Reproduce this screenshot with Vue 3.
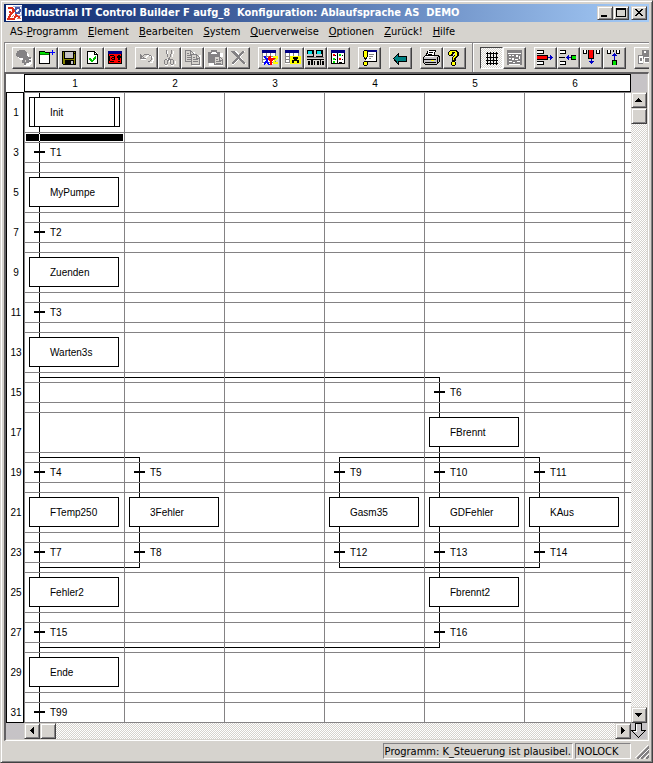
<script setup>
const menus = [
  ['AS-', 'P', 'rogramm'], ['', 'E', 'lement'], ['', 'B', 'earbeiten'], ['', 'S', 'ystem'],
  ['', 'Q', 'uerverweise'], ['', 'O', 'ptionen'], ['', 'Z', 'urück!'], ['', 'H', 'ilfe'],
]

// Icon layers: [colour, path, filled?]; unfilled layers are 1px strokes on half-pixel centres.
const W = '#fff', K = '#000', G = '#848284', N = '#000084', Y = '#ffff00', R = '#ff0000', B = '#0000c6', L = '#00e000'
const tableBase = [
  [W, 'M4 3h14v14H4z', 1], [N, 'M4 3h14v3H4z', 1],
  [G, 'M4.5 6v10M8.5 6v10M12.5 6v10M17.5 6v10M4 9.5h14M4 12.5h14M4 15.5h14'],
]
const icons = {
  run: [[W, 'M8 5h6l3 3v3h3v5l-3 3h-5v-2h3v-4H8l-3-3z', 1],
    [G, 'M7 3h5l3 2v3l1 2h3v2h-2v1h2v2h-2v1h-3v-3h-3v-2H7v-1H5V9H4V6h1V4h2zM10 13h3v2h1v3h-2v-2h-2z', 1]],
  open: [[W, 'M4 5h11v12H4z', 1], [K, 'M4.5 16.5v-12h5v1h5v11z'], [L, 'M5 5h5v1h4v2H5z', 1], ['#008200', 'M5 7h9v1H5z', 1],
    ['#0000ff', 'M17.5 3v5M15 5.5h5'], ['#0000ff', 'M16 5h3v1h-3z', 1]],
  save: [['#848200', 'M5 5h13v13H5z', 1], [K, 'M4.5 4.5h13v13h-12l-1-1z'], ['#c6c3c6', 'M7 5h8v6H7z', 1], [K, 'M6.5 5v6.5h9V5M16 6h1'],
    [K, 'M7 13h9v4H7z', 1], ['#c6c3c6', 'M13 14h2v3h-2z', 1]],
  check: [[W, 'M7 4h7l3 3v10H7z', 1], [K, 'M6.5 4.5h7l3 3v9h-10zM13.5 4v3.5h3'], ['#00c300', 'M8 11h2v1h1v1h1v-2h1v-1h1V9h1v3h-1v1h-1v1h-1v1h-2v-1H9v-1H8z', 1]],
  alert: [[R, 'M4 4h14v13H4z', 1], [N, 'M4 4h14v3H4z', 1], [K, 'M4.5 7v9.5h13V7'],
    [K, 'M6 8.5h4M5.5 9v5M6 14.5h4M10.5 9v4M8 10.5h2M7.5 11v1M8 12.5h2'], [K, 'M14 8h2v5h-2zM13 9h4v2h-4zM14 14h2v1h-2z', 1]],
  undo: [[W, 'M6.5 8v4.5h4M10 10.5h1v-1h1v-1h3v1h2v1h1v3h-1v2h-2'], [G, 'M5.5 6.5v5h5M6 10.5h1M7 9.5h1M8 8.5h1M9 7.5h1M9 7.5h5M14 8.5h2M16.5 9v4M16 13.5h-1M15 14.5h-2M6 9.5h2M6 8.5h1M8 10.5h1']],
  cut: [[W, 'M9.5 4v5M15.5 4v3M14.5 7v3M7 12.5h3M7 18.5h3M13 18.5h3M17.5 14v3M11.5 12v3'],
    [G, 'M8.5 3v4M9.5 7v3M13.5 3v4M12.5 7v3M11 9.5v3M10.5 11v3M12.5 12v2M7 12.5h2M6.5 13v4M7 17.5h2M9.5 13v4M13 12.5h2M12.5 13v4M13 17.5h2M15.5 13v4']],
  copy: [[W, 'M5 5h9v10H5zM11 8h9v11h-9z', 1], ['#d6d3ce', 'M5 4h7v10H5z', 1], [G, 'M4.5 3.5h5l3 3v8h-8zM9.5 4v3h3M6 6.5h2M6 8.5h5M6 10.5h5M6 12.5h5'],
    ['#d6d3ce', 'M10 7h8v10h-8z', 1], [G, 'M10.5 7.5h5l3 3v7h-8zM15.5 8v3h3M12 10.5h2M12 12.5h5M12 14.5h5']],
  paste: [[W, 'M5 6h14v13H5z', 1], [G, 'M4 5h3V3h6v2h3v4h-4v7H4z', 1], [W, 'M7 6.5h6M8 5.5h4'], ['#d6d3ce', 'M10 10h9v8h-9z', 1],
    [G, 'M10.5 9.5h5l3 3v5h-8zM15.5 10v3h3M12 12.5h2M12 14.5h5M12 16.5h5']],
  del: [[W, 'M6 4h3l4 4 5-4-4 6 5 7h-3l-4-5-5 6H5l6-7-5-6z', 1], [G, 'M4 4h3l4 4 5-4h1v1l-4 5 5 6v1h-2l-5-5-5 5H5v-2l5-5-6-5z', 1]],
  xyz: [...tableBase, ['#0000ff', 'M6 9h2l1 3 2-3h1v2l-2 3 2 4h-2l-2-2-1 2H6v-2l2-3-2-2z', 1], [R, 'M11 9h2l1 3 2-3h1v2l-3 4v3h-2v-3l-2-3z', 1],
    [Y, 'M15 9h5v2l-3 4h3v2h-5v-2l3-4h-3z', 1]],
  find: [...tableBase, [Y, 'M9 9h11v8H9z', 1], [K, 'M12 10h5v2h-1v1h2v3h-2v-2h-3v2h-2v-3h2v-1h-1z', 1]],
  net: [[K, 'M3 3h7v7H3zM12 3h7v7h-7z', 1], ['#c6c3c6', 'M3 7h6v2H3zM12 7h6v2h-6z', 1], ['#00e3e7', 'M4 4h4v3H4zM13 4h4v3h-4z', 1], [G, 'M3 10h17v1H3z', 1],
    [K, 'M3 12h17v1H3zM4 14h2v4H4zM7 13h2v5H7zM10 14h1v4h-1zM13 14h2v4h-2zM16 13h1v5h-1zM18 14h2v4h-2z', 1]],
  cols: [[W, 'M4 3h14v14H4z', 1], [K, 'M4.5 4v13M4 16.5h14M17.5 4v13M10.5 6v11'], [N, 'M4 3h14v3H4z', 1],
    [R, 'M6 7h2v2H6zM12 11h2v2h-2z', 1], [L, 'M6 11h2v2H6zM12 7h2v2h-2zM6 14h2v2H6z', 1], [K, 'M8 8.5h1M15 8.5h1M8 12.5h1M15 12.5h1M12 15.5h3']],
  note: [[W, 'M8 3h11v12H8z', 1], [K, 'M18.5 4v11M9 14.5h9'], [G, 'M11 7.5h5M11 9.5h4M11 11.5h2'], [N, 'M7 3h12v2H7z', 1],
    [K, 'M6 3h3v1h1v6H9v2H8v1H7v-1H6v-2H5V4h1zM6 14h3v1h1v3H9v1H6v-1H5v-3h1z', 1], [Y, 'M6 4h3v6H8v1H7v-1H6zM6 15h3v3H6z', 1]],
  back: [['#008284', 'M4 11.5L10 6v3h8v6h-8v3z', 1], [K, 'M4.5 11.5L9.5 6.5v3h8v5h-8v3z']],
  print: [[W, 'M8 3h8l-2 7H5z', 1], [K, 'M8.5 3.5h7l-2 6M8 4l-2 5M9 5.5h4M8 7.5h4'], ['#c6c3c6', 'M4 10h12l3-2v7l-2 2H4z', 1],
    [K, 'M3.5 10.5l2-2h12l2 1v5l-3 3h-11l-2-2zM4 12.5h12M17 10v6M5 15.5h11'], [Y, 'M11 13h3v1h-3z', 1]],
  help: [[K, 'M7 3h7v1h1v1h1v4h-1v1h-1v1h-1v3H9v-4h1V9h1V8h1V6h-1v1h-1v2H6V8H5V5h1V4h1zM9 14h3v1h1v3h-1v1H9v-1H8v-3h1z', 1],
    [Y, 'M7 4h6v1h1v4h-1v1h-1v1h-1v2h-1v-3h1V9h1V5H9v2H8v1H6V5h1zM9 15h3v3H9z', 1]],
  grid: [[K, 'M6 6.5h12M6 10.5h12M6 13.5h12M6 16.5h12M7.5 5v13M10.5 5v13M13.5 5v13M16.5 5v13']],
  form: [[G, 'M4 3h15v15H4z', 1], [W, 'M5 6h13v1H5zM6 8h2v1H6zM9 8h2v1H9zM13 8h2v2h-2zM6 11h2v1H6zM9 11h2v2H9zM12 12h3v1h-3zM16 9h1v3h-1zM6 14h3v1H6zM10 15h2v1h-2zM14 14h3v1h-3zM6 17h11v1H6z', 1]],
  rowOut: [[W, 'M3 3h7v4H3zM3 14h7v3H3z', 1], [K, 'M3 3.5h6.5v3H3M3 17.5h6.5v-3H3M3 8.5h10v4H3'], [R, 'M3 9h10v3H3z', 1], [B, 'M14 10h2V8h1v1h1v1h1v1h-1v1h-1v1h-1v-2h-2z', 1]],
  rowIn: [[W, 'M3 3h6v4H3zM3 14h6v3H3z', 1], [K, 'M3 3.5h5.5v3H3M3 17.5h5.5v-3H3M2 10.5h6'], [L, 'M15 9h4v3h-4z', 1], [K, 'M19 8.5h-4.5v4H19'], [B, 'M14 10h-2V8h-1v1h-1v1H9v1h1v1h1v1h1v-2h2z', 1]],
  colOut: [[W, 'M3 3h4v4H3zM16 3h4v4h-4z', 1], [K, 'M3.5 3v3.5h3V3M16.5 3v3.5h3V3M8.5 3v8.5h5V3'], [R, 'M9 3h4v8H9z', 1], [B, 'M11 12h1v2h2v1h-1v1h-1v1h-1v-1h-1v-1H9v-1h2z', 1]],
  colIn: [[W, 'M4 3h4v3H4zM13 3h4v3h-4z', 1], [K, 'M4.5 3v3.5h3V3M13.5 3v3.5h3V3M10.5 3v2'], [B, 'M11 13h1v-4h2V8h-1V7h-1V6h-1v1h-1v1H9v1h2z', 1], [L, 'M10 14h3v4h-3z', 1], [K, 'M9.5 18v-4.5h4V18']],
  last: [[G, 'M8 3h10v9H8zM4 8h5v9H4z', 1], [W, 'M10 4h2v2h-2zM5 9h4v7H5zM10 10h5v6h-5z', 1], [G, 'M6 11h2v3H6zM11 11h4v4h-4z', 1]],
}
const groups = [
  [['run', 'Start', 1], ['open', 'Öffnen'], ['save', 'Speichern'], ['check', 'Plausibilisieren'], ['alert', 'Meldungen']],
  [['undo', 'Rückgängig', 1], ['cut', 'Ausschneiden', 1], ['copy', 'Kopieren', 1], ['paste', 'Einfügen', 1], ['del', 'Löschen', 1]],
  [['xyz', 'Variablen'], ['find', 'Suchen'], ['net', 'Hardware'], ['cols', 'Struktur']],
  [['note', 'Kommentar']],
  [['back', 'Zurück']],
  [['print', 'Drucken'], ['help', 'Hilfe']],
  [['grid', 'Raster'], ['form', 'Formular', 1]],
  [['rowOut', 'Zeile löschen'], ['rowIn', 'Zeile einfügen'], ['colOut', 'Spalte löschen'], ['colIn', 'Spalte einfügen']],
  [['last', 'Baustein', 1]],
]

// One period of the chart: step 40, gap 10, transition 20, gap 10.
const rows = Array.from({ length: 16 }, (_, i) => i * 2 + 1)
const gridH = Array.from({ length: 9 }, (_, i) => [0, 40, 50, 70].map(o => i * 80 + o)).flat()
const gridV = Array.from({ length: 12 }, (_, i) => i * 100)
const steps = [
  ['Init', 0, 0, true], ['MyPumpe', 0, 1], ['Zuenden', 0, 2], ['Warten3s', 0, 3], ['FBrennt', 4, 4],
  ['FTemp250', 0, 5], ['3Fehler', 1, 5], ['Gasm35', 3, 5], ['GDFehler', 4, 5], ['KAus', 5, 5],
  ['Fehler2', 0, 6], ['Fbrennt2', 4, 6], ['Ende', 0, 7],
]
const transitions = [
  ['T1', 0, 0], ['T2', 0, 1], ['T3', 0, 2], ['T6', 4, 3], ['T4', 0, 4], ['T5', 1, 4], ['T9', 3, 4], ['T10', 4, 4], ['T11', 5, 4],
  ['T7', 0, 5], ['T8', 1, 5], ['T12', 3, 5], ['T13', 4, 5], ['T14', 5, 5], ['T15', 0, 6], ['T16', 4, 6], ['T99', 0, 7],
]
const at = (c, y) => ({ left: c * 100 + 'px', top: y + 'px' })
</script>

<template>
  <div class="window">
    <header class="title">
      <svg class="logo" viewBox="0 0 16 16" width="16" height="16" aria-hidden="true">
        <path fill="#fff" d="M0 0h16v16H0z" />
        <path fill="none" stroke="#a8b4dc" d="M7 1h8v9h-4" />
        <path fill="none" stroke="#4a5ca8" stroke-width="2" d="M10 3h3l1 2-1 3h-3l-1-2z" />
        <path fill="none" stroke="#e0301c" stroke-width="2" d="M2 3h4l2 3-3 3-2 3 1 2h4l2-4 4 3M3 7l3 1M1 14h3" />
        <path fill="none" stroke="#e87868" d="M6 12l2-2M11 13h4" />
      </svg>
      <h1>Industrial IT Control Builder F aufg_8&nbsp; Konfiguration: Ablaufsprache AS&nbsp; DEMO</h1>
      <div class="sys">
        <button class="raised" aria-label="Minimieren"><svg viewBox="0 0 12 10" width="12" height="10"><path d="M2 7h6v2H2z" /></svg></button>
        <button class="raised" aria-label="Maximieren"><svg viewBox="0 0 12 10" width="12" height="10"><path fill-rule="evenodd" d="M1 0h10v9H1zM2 2h8v6H2z" /></svg></button>
        <button class="raised close" aria-label="Schließen"><svg viewBox="0 0 12 10" width="12" height="10"><path d="M2 1h2v1h1v1h2V2h1V1h2v1H9v1H8v1H7v1h1v1h1v1h1v1H8V7H7V6H5v1H4v1H2V7h1V6h1V5h1V4H4V3H3V2H2z" /></svg></button>
      </div>
    </header>

    <nav class="menu">
      <button v-for="m in menus" :key="m[1] + m[2]">{{ m[0] }}<u>{{ m[1] }}</u>{{ m[2] }}</button>
    </nav>

    <div class="toolbar">
      <template v-for="(g, i) in groups" :key="i">
        <div v-if="i === 6" class="divider"></div>
        <div class="group">
          <button v-for="t in g" :key="t[0]" class="tool" :class="{ pressed: t[0] === 'grid' }" :aria-label="t[1]" :disabled="!!t[2]">
            <svg viewBox="0 0 23 22" width="23" height="22">
              <path v-for="(p, k) in icons[t[0]]" :key="k" :d="p[1]" :fill="p[2] ? p[0] : 'none'" :stroke="p[2] ? 'none' : p[0]" />
            </svg>
          </button>
        </div>
      </template>
    </div>

    <main class="workspace">
      <div class="corner"></div>
      <div class="colhead"><span v-for="n in 6" :key="n">{{ n }}</span></div>
      <div class="filler"></div>

      <div class="rowhead"><div class="rowlabels"><span v-for="n in rows" :key="n">{{ n }}</span></div></div>
      <div class="chart">
        <svg class="lines" width="100%" height="100%" aria-hidden="true">
          <g fill="#000">
            <path d="M15 0h1v720h-1z" />
            <path d="M15 285h401v271H15v-1h400V286H15z" />
            <path d="M15 365h101v111H15v-1h100V366H15z" />
            <path d="M315 365h201v111H315zM316 366v109h199V366z" fill-rule="evenodd" />
            <path d="M2 42h97v7H2z" />
          </g>
          <path d="M15 42h1v7h-1z" fill="#fff" />
          <g fill="#848284">
            <rect v-for="y in gridH" :key="'h' + y" x="0" :y="y" width="100%" height="1" />
            <rect v-for="x in gridV" :key="'v' + x" :x="x" y="0" width="1" height="100%" />
          </g>
        </svg>
        <div v-for="s in steps" :key="s[0]" class="step" :class="{ initial: s[3] }" :style="at(s[1], s[2] * 80)"><span>{{ s[0] }}</span></div>
        <div v-for="t in transitions" :key="t[0]" class="transition" :style="at(t[1], t[2] * 80 + 51)"><i></i><span>{{ t[0] }}</span></div>
      </div>
      <div class="scroll vertical">
        <button class="raised" aria-label="Nach oben"><svg viewBox="0 0 8 6" width="8" height="6"><path d="M3 1h1v1h1v1h1v1h1v1H0V4h1V3h1V2h1z" /></svg></button>
        <div class="raised thumb"></div>
        <button class="raised end" aria-label="Nach unten"><svg viewBox="0 0 8 6" width="8" height="6"><path d="M0 1h7v1H6v1H5v1H4v1H3V4H2V3H1V2H0z" /></svg></button>
      </div>

      <div class="filler"></div>
      <div class="scroll horizontal">
        <button class="raised" aria-label="Nach links"><svg viewBox="0 0 6 8" width="6" height="8"><path d="M4 0h1v7H4V6H3V5H2V4H1V3h1V2h1V1h1z" /></svg></button>
        <div class="raised thumb"></div>
        <button class="raised end" aria-label="Nach rechts"><svg viewBox="0 0 6 8" width="6" height="8"><path d="M1 0h1v1h1v1h1v1h1v1H4v1H3v1H2v1H1z" /></svg></button>
      </div>
      <button class="jump" aria-label="Nächste Seite">
        <svg viewBox="0 0 16 16" width="16" height="16"><path fill="#c6c3c6" stroke="#000" d="M4.5.5h6v7h4l-7 7-7-7h4z" /><path fill="none" stroke="#fff" d="M5.5 1v7.5h-3" /></svg>
      </button>
    </main>

    <footer class="status">
      <span class="message">Programm: K_Steuerung ist plausibel.</span>
      <span class="lock">NOLOCK</span>
      <svg class="grip" viewBox="0 0 14 14" width="14" height="14" aria-hidden="true">
        <path stroke="#fff" d="M0 13L13 0M4 14L14 4M9 14l5-5" /><path stroke="#848284" stroke-width="2" d="M2 14L14 2M6 14l8-8M11 14l3-3" />
      </svg>
    </footer>
  </div>
</template>

<style>
body { margin: 0; }
</style>

<style scoped>
* { box-sizing: border-box; }
.window {
  min-height: 100vh;
  display: flex;
  flex-direction: column;
  padding: 2px;
  background: #d6d3ce;
  border: 1px solid;
  border-color: #d6d3ce #424142 #424142 #d6d3ce;
  box-shadow: inset 1px 1px #fff, inset -1px -1px #848284;
  font: 11px/14px "DejaVu Sans Condensed", "DejaVu Sans", sans-serif;
  color: #000;
  overflow: hidden;
}
svg { display: block; shape-rendering: crispEdges; flex: none; }
button { font: inherit; color: inherit; padding: 0; margin: 0; border: 0; background: none; border-radius: 0; }
.raised {
  display: flex;
  align-items: center;
  justify-content: center;
  background: #d6d3ce;
  border: 1px solid;
  border-color: #d6d3ce #424142 #424142 #d6d3ce;
  box-shadow: inset 1px 1px #fff, inset -1px -1px #848284;
}
.title {
  display: flex;
  align-items: center;
  height: 18px;
  margin: 1px 1px 0;
  padding: 0 2px;
  background: linear-gradient(90deg, #08246b, #a5cbf7);
  color: #fff;
}
.title h1 { flex: 1; min-width: 0; margin: 0 0 0 2px; font-size: 11px; line-height: 18px; font-weight: bold; white-space: nowrap; overflow: hidden; }
.sys { display: flex; }
.sys .raised { width: 16px; height: 14px; }
.sys .close { margin-left: 2px; }
.menu { display: flex; height: 20px; margin-left: 2px; }
.menu button { padding: 0 5px; line-height: 20px; white-space: nowrap; }
.toolbar {
  display: flex;
  gap: 8px;
  height: 30px;
  margin: 0 1px;
  padding: 4px 0 3px 7px;
  border: solid #848284;
  border-width: 1px 0 0 1px;
  box-shadow: inset 1px 1px #fff;
  overflow: hidden;
}
.group { display: flex; flex: none; }
.divider { flex: none; width: 2px; margin: -4px -2px -3px; border-left: 1px solid #848284; border-right: 1px solid #fff; }
.tool {
  flex: none;
  width: 23px;
  height: 22px;
  border: 1px solid;
  border-color: #fff #424142 #424142 #fff;
  box-shadow: inset -1px -1px #848284;
}
.tool svg { margin: -1px; }
.pressed {
  border-color: #424142 #fff #fff #424142;
  box-shadow: none;
  background: repeating-conic-gradient(#fff 0 25%, #d6d3ce 0 50%) 0 0 / 2px 2px;
}
.workspace {
  flex: 1;
  display: grid;
  grid-template-columns: 18px minmax(0, 1fr) 16px;
  grid-template-rows: 18px minmax(0, 1fr) 16px;
  margin: 0 1px;
  border: solid;
  border-width: 2px 1px 1px 2px;
  border-color: #636163 #fff #fff #636163;
  padding: 0 1px 1px 0;
  font-family: "Liberation Sans", sans-serif;
  font-size: 10px;
}
.corner { background: #fff; }
.filler { background: #c6c3c6; }
.colhead { display: flex; background: #fff; border: 1px solid #000; overflow: hidden; line-height: 17px; }
.colhead span { flex: none; width: 100px; text-align: center; }
.rowhead { position: relative; background: #fff; border: 1px solid #000; overflow: hidden; }
.rowlabels { position: absolute; inset: 0; display: grid; grid-auto-rows: 40px; padding-left: 2px; }
.rowlabels span { line-height: 40px; text-align: center; }
.chart { position: relative; background: #fff; overflow: hidden; }
.lines { position: absolute; inset: 0; }
.step {
  position: absolute;
  margin: 5px;
  width: 90px;
  height: 30px;
  padding-left: 20px;
  line-height: 30px;
  background: #fff;
  border: 1px solid #000;
}
.initial { width: 91px; }
.initial span { display: block; height: 28px; margin: 0 4px 0 -16px; padding-left: 15px; border: solid #000; border-width: 0 1px; }
.transition { position: absolute; display: flex; align-items: center; height: 18px; padding-left: 10px; line-height: 16px; }
.transition i { width: 11px; height: 2px; margin-right: 5px; background: #000; }
.transition span { padding-top: 2px; }
.scroll { display: flex; background: repeating-conic-gradient(#fff 0 25%, #d6d3ce 0 50%) 0 0 / 2px 2px; }
.scroll .raised { flex: none; width: 16px; height: 16px; }
.vertical { flex-direction: column; }
.vertical .end { margin-top: auto; }
.horizontal .end { margin-left: auto; }
.jump { background: #c6c3c6; }
.status { display: flex; justify-content: flex-end; gap: 2px; padding: 2px 1px 1px 0; }
.status span { height: 16px; padding: 0 1px; line-height: 15px; border: 1px solid; border-color: #848284 #fff #fff #848284; white-space: nowrap; }
.lock { width: 56px; }
.grip { align-self: flex-end; margin-left: 2px; }
</style>
